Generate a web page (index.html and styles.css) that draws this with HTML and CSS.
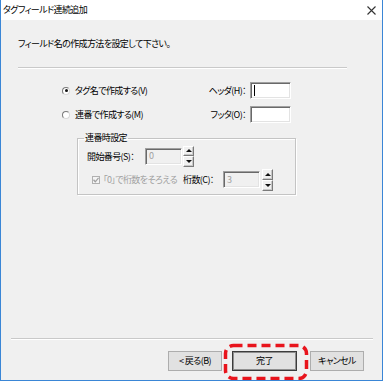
FILE: index.html
```html
<!DOCTYPE html>
<html lang="ja">
<head>
    <meta charset="UTF-8">
    <meta name="viewport" content="width=device-width, initial-scale=1.0">
    <title>タグフィールド連続追加</title>
    <link rel="stylesheet" href="styles.css">
</head>
<body>
    <div class="window">
        <div class="titlebar">
            <span class="title">タグフィールド連続追加</span>
            <svg class="close" width="9" height="9" viewBox="0 0 9 9"><path d="M0.5 0.5 L8.5 8.5 M8.5 0.5 L0.5 8.5" stroke="#333" stroke-width="1.1" fill="none"/></svg>
        </div>

        <div class="client">
            <p class="intro">フィールド名の作成方法を設定して下さい。</p>
            <div class="etch etch-top"></div>

            <div class="options">
                <label class="radio-row"><span class="radio checked"></span>タグ名で作成する(V)</label>
                <span class="field-label">ヘッダ(H)：</span>
                <span class="field"><span class="caret"></span></span>

                <label class="radio-row"><span class="radio"></span>連番で作成する(M)</label>
                <span class="field-label">フッタ(O)：</span>
                <span class="field"></span>
            </div>

            <fieldset class="group">
                <legend>連番時設定</legend>
                <div class="group-row first">
                    <span class="num-label">開始番号(S)：</span>
                    <span class="field disabled">0</span>
                    <span class="spin"><span class="up"></span><span class="down"></span></span>
                </div>
                <div class="group-row second">
                    <span class="check-wrap">
                        <span class="check"><svg width="6" height="6" viewBox="0 0 6 6"><path d="M0.5 2.8 L2.3 4.8 L5.6 0.8" stroke="#a0a0a0" stroke-width="1.3" fill="none"/></svg></span>
                        <span class="dim">「0」で桁数をそろえる</span>
                    </span>
                    <span class="num-label short">桁数(C)：</span>
                    <span class="field disabled">3</span>
                    <span class="spin tall"><span class="up"></span><span class="down"></span></span>
                </div>
            </fieldset>

            <div class="spacer"></div>
            <div class="etch etch-bottom"></div>

            <div class="buttons">
                <button class="btn back">&lt;&nbsp;戻る(B)</button>
                <button class="btn default">完了</button>
                <button class="btn cancel">キャンセル</button>
            </div>
        </div>

        <!-- red marker round the finish button -->
        <svg class="highlight" width="86" height="38" viewBox="0 0 86 38"><rect x="2.5" y="2.5" width="81" height="33" rx="8" ry="8" fill="none" stroke="#e8141c" stroke-width="3.5" stroke-dasharray="9 5"/></svg>
    </div>
</body>
</html>
```

FILE: styles.css
```css
body { margin: 0; background: #f0f0f0; font-family: "Noto Sans CJK JP", sans-serif; font-size: 9px; letter-spacing: -0.6px; color: #000; font-feature-settings: "palt"; white-space: nowrap; }
.window { position: relative; width: 383px; height: 381px; box-sizing: border-box; border: 1px solid #3a86d6; border-top: none; display: flex; flex-direction: column; overflow: hidden; background: #f0f0f0; }
.titlebar { height: 20px; background: #fff; display: flex; align-items: center; justify-content: space-between; flex-shrink: 0; }
.title { padding-left: 2px; line-height: 20px; }
.close { margin-right: 6px; }
.client { flex: 1; display: flex; flex-direction: column; }
.intro { margin: 0; padding: 17px 0 0 17px; line-height: 14px; }
.etch { border-top: 1px solid #c9c9c9; border-bottom: 1px solid #fff; box-sizing: border-box; height: 2px; }
.etch-top { margin: 16px 0 0 17px; width: 329px; }
.etch-bottom { margin: 0 9px 0 10px; }
.options { display: grid; grid-template-columns: 143px 45px 41px; grid-template-rows: 19px 19px; row-gap: 5px; margin: 12px 0 0 61px; align-items: center; }
.radio-row { display: flex; align-items: center; }
.radio { width: 8px; height: 8px; box-sizing: border-box; border-radius: 50%; border: 1px solid; border-color: #7a7a7a #d8d8d8 #d8d8d8 #7a7a7a; background: #fff; margin-right: 5px; display: flex; align-items: center; justify-content: center; }
.radio.checked::after { content: ""; width: 3px; height: 3px; border-radius: 50%; background: #111; }
.field-label { text-align: right; padding-right: 4px; }
.field { height: 17px; box-sizing: border-box; border: 1px solid; border-color: #a0a0a0 #fff #fff #a0a0a0; box-shadow: inset 1px 1px #696969, inset -1px -1px #e3e3e3; background: #fff; display: flex; align-items: center; padding-left: 3px; }
.caret { width: 1px; height: 11px; background: #000; }
.field.disabled { width: 37px; background: #f0f0f0; color: #a0a0a0; line-height: 14px; }
.group { margin: 7px 0 0 76px; padding: 0 0 3px 9px; width: 219px; box-sizing: border-box; min-width: 0; border: 1px solid #c4c4c4; box-shadow: inset 1px 1px #fff, 1px 1px #fff; }
.group legend { margin-left: -3px; padding: 0 1px; line-height: 14px; }
.group-row { display: flex; align-items: center; }
.group-row.first { height: 22px; }
.group-row.second { height: 23px; margin-top: 1px; }
.num-label { width: 58px; }
.num-label.short { width: 40px; }
.spin { width: 11px; height: 21px; margin-left: 1px; display: flex; flex-direction: column; }
.spin.tall { height: 22px; margin-left: 2px; }
.spin span { flex: 1; box-sizing: border-box; border: 1px solid; border-color: #fff #7a7a7a #7a7a7a #fff; background: #f0f0f0; box-shadow: inset -1px -1px #c8c8c8; display: flex; align-items: center; justify-content: center; }
.spin .up::after { content: ""; border-left: 3px solid transparent; border-right: 3px solid transparent; border-bottom: 3px solid #111; }
.spin .down::after { content: ""; border-left: 3px solid transparent; border-right: 3px solid transparent; border-top: 3px solid #111; }
.check-wrap { width: 91px; margin-left: 5px; display: flex; align-items: center; }
.check { width: 8px; height: 8px; box-sizing: border-box; border: 1px solid #b0b0b0; background: #f4f4f4; margin-right: 3px; display: flex; align-items: center; justify-content: center; }
.dim { color: #a0a0a0; }
.spacer { flex: 1; }
.buttons { display: flex; justify-content: flex-end; margin: 11px 0 9px; padding-right: 18px; }
.btn { height: 20px; box-sizing: border-box; font-family: inherit; font-size: 9px; letter-spacing: -0.6px; color: #000; font-feature-settings: "palt"; background: #e1e1e1; border: 1px solid #adadad; padding: 0; line-height: 16px; }
.btn.back { width: 54px; }
.btn.default { width: 65px; margin-left: 10px; border-color: #3c3c3c; box-shadow: inset 0 0 0 1px #8f8f8f; }
.btn.cancel { width: 54px; margin-left: 13px; }
.highlight { position: absolute; left: 222px; top: 343px; }
```
